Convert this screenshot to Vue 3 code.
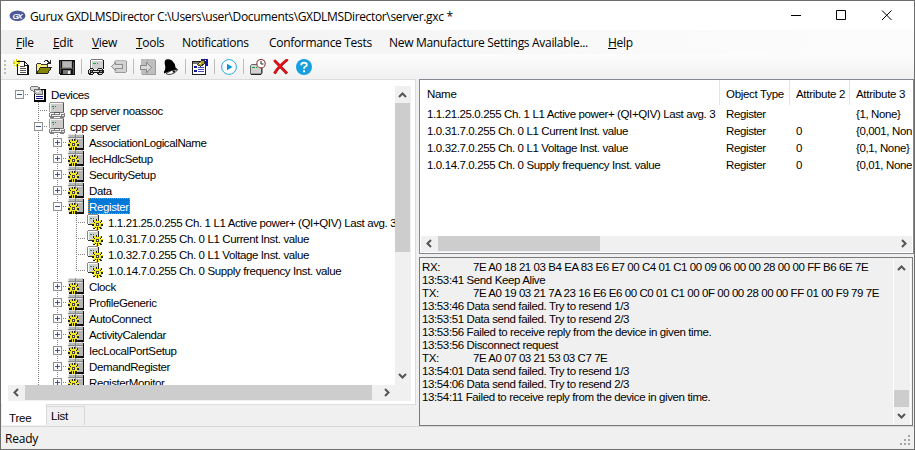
<script setup>
    import { computed } from 'vue'

    const menus = [
        { key: 'F', text: 'ile', width: 37 },
        { key: 'E', text: 'dit', width: 39 },
        { key: 'V', text: 'iew', width: 44 },
        { key: 'T', text: 'ools', width: 46 },
        { key: '', text: 'Notifications', width: 87 },
        { key: '', text: 'Conformance Tests', width: 120 },
        { key: '', text: 'New Manufacture Settings Available...', width: 219 },
        { key: 'H', text: 'elp', width: 40 },
    ]

    const tools = [
        'new', 'open', 'save', '|', 'connect', 'disconnect', '|', 'read', 'bell', '|',
        'properties', '|', 'play', '|', 'schedule', 'delete', 'help',
    ]
    const smooth = ['play', 'delete', 'help', 'schedule', 'bell']

    const nodes = [
        { level: 0, icon: 'devices', box: '-', text: 'Devices' },
        { level: 1, icon: 'device', text: 'cpp server noassoc' },
        { level: 1, icon: 'device', box: '-', text: 'cpp server' },
        { level: 2, icon: 'group', box: '+', text: 'AssociationLogicalName' },
        { level: 2, icon: 'group', box: '+', text: 'IecHdlcSetup' },
        { level: 2, icon: 'group', box: '+', text: 'SecuritySetup' },
        { level: 2, icon: 'group', box: '+', text: 'Data' },
        { level: 2, icon: 'group', box: '-', text: 'Register', selected: true },
        { level: 3, icon: 'item', text: '1.1.21.25.0.255 Ch. 1 L1 Active power+ (QI+QIV) Last avg. 3' },
        { level: 3, icon: 'item', text: '1.0.31.7.0.255 Ch. 0 L1 Current Inst. value' },
        { level: 3, icon: 'item', text: '1.0.32.7.0.255 Ch. 0 L1 Voltage Inst. value' },
        { level: 3, icon: 'item', text: '1.0.14.7.0.255 Ch. 0 Supply frequency Inst. value', last: true },
        { level: 2, icon: 'group', box: '+', text: 'Clock' },
        { level: 2, icon: 'group', box: '+', text: 'ProfileGeneric' },
        { level: 2, icon: 'group', box: '+', text: 'AutoConnect' },
        { level: 2, icon: 'group', box: '+', text: 'ActivityCalendar' },
        { level: 2, icon: 'group', box: '+', text: 'IecLocalPortSetup' },
        { level: 2, icon: 'group', box: '+', text: 'DemandRegister' },
        { level: 2, icon: 'group', box: '+', text: 'RegisterMonitor' },
    ]

    // One guide cell per level, the last one joins the icon
    const tree = computed(() =>
        nodes.map((n) => {
            const guides = []
            for (let i = 0; i <= n.level; i++) {
                if (i === n.level) guides.push(i === 0 ? 'root' : n.last ? 'end' : 'tee')
                else guides.push(i === 0 ? 'none' : 'line')
            }
            return { ...n, guides }
        }),
    )

    const objects = [
        ['1.1.21.25.0.255 Ch. 1 L1 Active power+ (QI+QIV) Last avg. 3', 'Register', '', '{1, None}'],
        ['1.0.31.7.0.255 Ch. 0 L1 Current Inst. value', 'Register', '0', '{0,001, Non'],
        ['1.0.32.7.0.255 Ch. 0 L1 Voltage Inst. value', 'Register', '0', '{0,1, None}'],
        ['1.0.14.7.0.255 Ch. 0 Supply frequency Inst. value', 'Register', '0', '{0,01, None'],
    ]

    const log = [
        { tag: 'RX:', text: '7E A0 18 21 03 B4 EA 83 E6 E7 00 C4 01 C1 00 09 06 00 00 28 00 00 FF B6 6E 7E' },
        { text: '13:53:41 Send Keep Alive' },
        { tag: 'TX:', text: '7E A0 19 03 21 7A 23 16 E6 E6 00 C0 01 C1 00 0F 00 00 28 00 00 FF 01 00 F9 79 7E' },
        { text: '13:53:46 Data send failed. Try to resend 1/3' },
        { text: '13:53:51 Data send failed. Try to resend 2/3' },
        { text: '13:53:56 Failed to receive reply from the device in given time.' },
        { text: '13:53:56 Disconnect request' },
        { tag: 'TX:', text: '7E A0 07 03 21 53 03 C7 7E' },
        { text: '13:54:01 Data send failed. Try to resend 1/3' },
        { text: '13:54:06 Data send failed. Try to resend 2/3' },
        { text: '13:54:11 Failed to receive reply from the device in given time.' },
    ]
</script>

<template>
    <div class="window">
        <!-- Shared icon symbols -->
        <svg class="defs" aria-hidden="true">
            <symbol id="gear" viewBox="0 0 11 11">
                <path
                    d="M4 0h3v2h1V1h2v2H9v1h2v3H9v1h1v2H8V9H7v2H4V9H3v1H1V8h1V7H0V4h2V3H1V1h2v1h1z"
                    fill="#222"
                />
                <path
                    d="M5 0h1v2h2V1h1v2H8v1h3v1H9v2h1v2H9V8H7v3H6V8H5v3H4V8H3v1H1V8h1V5H0V4h3V3H2V1h1v1h2z"
                    fill="#f4ec1c"
                />
                <rect x="4" y="4" width="3" height="3" fill="#444" />
                <rect x="5" y="5" width="1" height="1" fill="#fff" />
            </symbol>
            <symbol id="devices" viewBox="0 0 16 16">
                <path d="M5 3h10v12H5z" fill="#fff" />
                <path d="M14 3h2v13H4v-2h10zM4 7h1v8H4zM9 3h6v1H9z" fill="#000" />
                <path d="M6 10h7v1H6zM6 12h7v1H6zM12 6h1v1h-1zM12 8h1v1h-1z" fill="#14147e" />
                <path d="M1 0h7v1h2v5H3V5H1V4H0V1h1z" fill="#777" />
                <path d="M1 1h7v4H3V4H1z" fill="#ddd" />
                <path d="M4 3h7v1h2v5H6V8H4z" fill="#666" />
                <path d="M5 4h6v1h1v3H6V7H5z" fill="#c8c8c8" />
                <path d="M6 5h3v1H6z" fill="#fff" />
            </symbol>
            <symbol id="device" viewBox="0 0 16 16">
                <path d="M1 1h13v10H1z" fill="#ccc" />
                <path d="M1 0h14v1H1zM0 1h1v9H0z" fill="#999" />
                <path d="M14 1h1v10h-1zM1 10h13v1H1z" fill="#555" />
                <path d="M1 1h12v1H2v8H1z" fill="#f4f4f4" />
                <path d="M3 4h2v1H3zM6 4h1v1H6zM4 6h1v1H4z" fill="#0b9a20" />
                <path d="M1 10h4v1h1v1h4v-1h1v-1h4v1h1v4h-1v1h-4v-1H5v1H1v-1H0v-4h1z" fill="#808080" />
                <path d="M1 11h4v1H2v2H1zM11 11h4v1h-3v2h-1zM5 13h6v1H5zM3 13h2v1H3zM13 13h2v1h-2z" fill="#eee" />
            </symbol>
            <symbol id="group" viewBox="0 0 16 16">
                <path d="M1 1h15v15H1z" fill="#111" />
                <path d="M0 0h15v14H0z" fill="#b5b5b5" />
                <path d="M0 0h7v1H0zM8 0h6v1H8zM0 4h7v1H0zM8 4h6v1H8zM0 0h1v14H0z" fill="#e2e2e2" />
                <path d="M7 0h1v14H7zM0 3h15v1H0z" fill="#8a8a8a" />
                <use href="#gear" x="0" y="5" width="11" height="11" />
            </symbol>
            <symbol id="item" viewBox="0 0 16 16">
                <path d="M0 1h1v9H0zM1 0h10v1H1z" fill="#888" />
                <path d="M1 1h10v9H1z" fill="#d1d1d1" />
                <path d="M11 1h1v10H1v-1h10z" fill="#333" />
                <path d="M1 1h9v1H2v8H1z" fill="#fff" />
                <path d="M3 4h2v1H3zM6 4h1v1H6z" fill="#0a9e1e" />
                <use href="#gear" x="5" y="5" width="11" height="11" />
            </symbol>
            <symbol id="new" viewBox="0 0 16 16">
                <path d="M4.500 2.500h7l3 3v10h-10z" fill="#fff" stroke="#111" />
                <path d="M11.500 2v4h4v10h-11" fill="none" stroke="#111" />
                <path d="M7 7h5v1H7zM7 9h6v1H7zM7 11h6v1H7zM7 13h6v1H7z" fill="#555" />
                <path d="M0 1h1v1H0zM3 0h1v8H3zM0 3h7v2H0zM1 2h1v1H1zM5 1h2v1H5zM1 6h1v1H1zM5 6h1v1H5z" fill="#d8d000" />
                <path d="M2 3h3v2H2z" fill="#fff86a" />
            </symbol>
            <symbol id="open" viewBox="0 0 16 16">
                <path d="M.5 14.500v-9l1-1h3l1 1h6v3" fill="#f5ee72" stroke="#333" />
                <path d="M.5 14.500l4-6h11l-4 6z" fill="#858500" stroke="#222" />
                <path d="M8 2h1V1h3v1h1v1h1V1h1v4h-4V4h1V3h-1V2H9v1H8z" fill="#222" />
            </symbol>
            <symbol id="save" viewBox="0 0 16 16">
                <path d="M0 1h16v15H1l-1-1z" fill="#111" />
                <path d="M3 2h10v7H3z" fill="#999" />
                <path d="M4 3h8v5H4z" fill="#b8b8b8" />
                <path d="M1 2h1v12H1zM14 3h1v12h-1zM2 9h12v1H2z" fill="#555" />
                <path d="M4 11h8v4H4z" fill="#777" />
                <path d="M9 12h2v3H9z" fill="#eee" />
            </symbol>
            <symbol id="connect" viewBox="0 0 16 16">
                <path d="M2 1h13v9H2z" fill="#d0d0d0" />
                <path d="M3 0h12v1H3zM2 1h1v8H2z" fill="#777" />
                <path d="M15 1h1v9h-1z" fill="#111" />
                <path d="M3 1h11v1H4v7H3z" fill="#fff" />
                <path d="M5 4h3v1H5zM9 4h1v1H9z" fill="#10b928" />
                <path d="M2 9h3v1h1v1h3v-1h1V9h4v1h1v1h1v3h-1v1h-1v1h-4v-1H9v-1H6v1H5v1H1v-1H0v-4h1v-1h1z" fill="#1c1c1c" />
                <path d="M2 10h3v1H2zM1 11h1v3H1zM10 10h4v1h-4zM5 12h6v1H5zM3 14h2v1H3zM11 14h3v1h-3z" fill="#d6d6d6" />
                <path d="M3 12h1v1H3zM12 12h2v1h-2z" fill="#999" />
            </symbol>
            <symbol id="disconnect" viewBox="0 0 16 16">
                <path d="M3 2h12v11H3z" fill="#d2d2d2" />
                <path d="M4 1h11v1H4zM3 2h1v3H3z" fill="#b5b5b5" />
                <path d="M15 2h1v11h-1zM4 13h11v1H4z" fill="#9a9a9a" />
                <path d="M.5 7.500l4-4v2h7v4h-7v2z" fill="#ddd" stroke="#8d8d8d" />
            </symbol>
            <symbol id="read" viewBox="0 0 16 16">
                <path d="M1 0h14v15H1z" fill="#bebebe" />
                <path d="M15 1h1v15H2v-1h13z" fill="#9c9c9c" />
                <path d="M7 0h1v15H7z" fill="#adadad" />
                <path d="M.5 6.500h6v-3l5 5-5 5v-3h-6z" fill="#d8d8d8" stroke="#8a8a8a" />
            </symbol>
            <symbol id="bell" viewBox="0 0 16 16">
                <path d="M3 .5Q6-.5 9 1.500Q12 4 12.500 8.500L15 10.500Q9 11 1 14.500V12.500Q3 10 2 6Q1 2 3 .5z" fill="#000" />
                <path d="M3 14.500Q8 10.500 14.500 10.700Q13 14 8 15.300Q4 16 3 14.500z" fill="#fff" stroke="#111" stroke-width=".8" />
                <path d="M9.500 11.800h2.500v1.200l-2 .8z" fill="#111" />
            </symbol>
            <symbol id="properties" viewBox="0 0 16 16">
                <path d="M.5 2.500h13v13H.5z" fill="#fff" stroke="#222" />
                <path d="M1 3h12v2H1z" fill="#777" />
                <path d="M2 7h3v2H2zM2 11h3v2H2z" fill="#111a9a" />
                <path d="M6 8h6v1H6zM6 10h6v1H6zM6 12h6v1H6z" fill="#4747bc" />
                <path d="M9 0h7v1H9zM14 1h2v6h-2z" fill="#1515a0" />
                <path d="M5.500 5.500l4-4h3v3l-4 3z" fill="#ae9d27" stroke="#333" />
                <path d="M7 4h2v1H7z" fill="#fff48c" />
            </symbol>
            <symbol id="play" viewBox="0 0 16 16">
                <circle cx="8" cy="8" r="7.400" fill="#fff" stroke="#29abe2" />
                <path d="M6 4.800l5.500 3.200L6 11.200z" fill="#0793dc" />
            </symbol>
            <symbol id="schedule" viewBox="0 0 16 16">
                <path d="M.5 6.500l1-1h10v8l-1 1.500H.5z" fill="#d2d2d2" stroke="#666" />
                <path d="M12 6v8l-1 1.500H1" fill="none" stroke="#222" />
                <path d="M2 8h3v1H2zM6 8h1v1H6z" fill="#12a52b" />
                <circle cx="11" cy="4.700" r="4.200" fill="#fff" stroke="#8a3a38" stroke-width="1.100" />
                <path d="M11 2v3h2.500" fill="none" stroke="#222" />
            </symbol>
            <symbol id="delete" viewBox="0 0 16 16">
                <path d="M1.500 1.500l12.500 13M14.500.5C9 5 4 10 1.500 14.500" fill="none" stroke="#8d0d12" stroke-width="2.800" />
                <path d="M1 1l12.500 13M15 .3C9 4 4 9 1.500 14.500" fill="none" stroke="#f01419" stroke-width="1.800" />
            </symbol>
            <symbol id="help" viewBox="0 0 16 16">
                <circle cx="8" cy="8" r="8" fill="#189fe2" />
                <path d="M5.300 6.200V5.700q0-2 2.800-2t2.700 2q0 1.100-1.300 1.800Q8 8.200 8 9.800" fill="none" stroke="#fff" stroke-width="1.900" />
                <path d="M7 11.200h2v2H7z" fill="#fff" />
            </symbol>
        </svg>

        <header class="titlebar">
            <svg class="logo" width="17" height="12" viewBox="0 0 17 12">
                <ellipse cx="8.500" cy="5.800" rx="8" ry="5.200" fill="#4d5a94" />
                <text x="8.500" y="8.500" text-anchor="middle" textLength="10">GX</text>
            </svg>
            <span class="title">Gurux GXDLMSDirector C:\Users\user\Documents\GXDLMSDirector\server.gxc *</span>
            <svg class="controls" width="112" height="12" viewBox="0 0 112 12">
                <path d="M5 5h10v1H5z" fill="#000" />
                <path d="M50.500.500h9v9h-9z" fill="none" stroke="#000" />
                <path d="M96 .500l9.500 9.500M105.500.500L96 10" stroke="#000" />
            </svg>
        </header>

        <nav class="menubar">
            <span v-for="m in menus" :key="m.text" class="menu" :style="{ width: m.width + 'px' }">
                <u>{{ m.key }}</u>{{ m.text }}
            </span>
        </nav>

        <div class="toolbar">
            <div class="grip"></div>
            <template v-for="(t, i) in tools" :key="i">
                <div v-if="t === '|'" class="sep"></div>
                <svg v-else class="tool" :class="{ smooth: smooth.includes(t) }">
                    <use :href="'#' + t" />
                </svg>
            </template>
        </div>

        <main class="content">
            <section class="left">
                <div class="tree-page">
                    <div class="tree">
                        <div v-for="n in tree" :key="n.text" class="node">
                            <span v-for="(g, i) in n.guides" :key="i" class="guide" :class="g">
                                <svg v-if="n.box && i === n.level" class="box" width="9" height="9">
                                    <rect x=".5" y=".5" width="8" height="8" fill="#fafafa" stroke="#919191" />
                                    <path d="M2 4h5v1H2z" fill="#3c5598" />
                                    <path v-if="n.box === '+'" d="M4 2h1v5H4z" fill="#3c5598" />
                                </svg>
                            </span>
                            <svg class="icon"><use :href="'#' + n.icon" /></svg>
                            <span class="label" :class="{ selected: n.selected }">{{ n.text }}</span>
                        </div>
                    </div>
                    <div class="vscroll">
                        <svg class="arrow" viewBox="0 0 16 17"><path d="M4 11l3.500-3.500L11 11" /></svg>
                        <div class="thumb tree-v"></div>
                        <svg class="arrow bottom" viewBox="0 0 16 17"><path d="M4 6l3.500 3.500L11 6" /></svg>
                    </div>
                    <div class="hscroll">
                        <svg class="arrow" viewBox="0 0 17 16"><path d="M10 4L6.500 7.500 10 11" /></svg>
                        <div class="thumb tree-h"></div>
                        <svg class="arrow right" viewBox="0 0 17 16"><path d="M7 4l3.500 3.500L7 11" /></svg>
                        <div class="corner"></div>
                    </div>
                </div>
                <div class="tabs">
                    <div class="tab active">Tree</div>
                    <div class="tab">List</div>
                </div>
            </section>

            <section class="right">
                <div class="list">
                    <div class="row head">
                        <span>Name</span>
                        <span>Object Type</span>
                        <span>Attribute 2</span>
                        <span>Attribute 3</span>
                    </div>
                    <div v-for="o in objects" :key="o[0]" class="row">
                        <span v-for="(c, i) in o" :key="i">{{ c }}</span>
                    </div>
                    <div class="hscroll list-scroll">
                        <svg class="arrow" viewBox="0 0 17 16"><path d="M10 4L6.500 7.500 10 11" /></svg>
                        <div class="thumb list-h"></div>
                        <svg class="arrow right" viewBox="0 0 17 16"><path d="M7 4l3.500 3.500L7 11" /></svg>
                    </div>
                </div>

                <div class="log">
                    <div class="lines">
                        <div v-for="(l, i) in log" :key="i" class="line">
                            <span v-if="l.tag" class="tag">{{ l.tag }}</span>
                            <span :class="{ hex: l.tag }">{{ l.text }}</span>
                        </div>
                    </div>
                    <div class="vscroll">
                        <svg class="arrow" viewBox="0 0 16 17"><path d="M4 11l3.500-3.500L11 11" /></svg>
                        <div class="thumb log-v"></div>
                        <svg class="arrow" viewBox="0 0 16 17"><path d="M4 7l3.500 3.500L11 7" /></svg>
                    </div>
                </div>
            </section>
        </main>

        <footer class="status">
            <span>Ready</span>
            <svg width="11" height="11" viewBox="0 0 11 11">
                <path
                    d="M8 0h2v2H8zM4 4h2v2H4zM8 4h2v2H8zM0 8h2v2H0zM4 8h2v2H4zM8 8h2v2H8z"
                    fill="#a5a5a5"
                />
            </svg>
        </footer>
    </div>
</template>

<style>
    body {
        margin: 0;
        overflow: hidden;
    }
</style>

<style scoped>
    .window {
        box-sizing: border-box;
        display: flex;
        flex-direction: column;
        width: 915px;
        height: 450px;
        border: 1px solid #6d6d6d;
        background: #f0f0f0;
        color: #000;
        font-family: 'Liberation Sans', Arial, sans-serif;
        font-size: 11.5px;
        letter-spacing: -0.38px;
        white-space: nowrap;
        overflow: hidden;
    }
    .defs {
        display: none;
    }

    .titlebar {
        display: flex;
        align-items: center;
        height: 30px;
        padding-left: 8px;
        background: #fff;
        font-family: 'Open Sans', 'Noto Sans', sans-serif;
        font-size: 12px;
    }
    .logo text {
        font: italic bold 8px 'Liberation Sans', sans-serif;
        letter-spacing: 0;
        fill: #fff;
    }
    .title {
        margin-left: 4px;
        padding-top: 1px;
        letter-spacing: -0.35px;
    }
    .controls {
        margin-left: auto;
        margin-right: 16px;
    }

    .menubar {
        display: flex;
        height: 24px;
        padding-left: 15px;
        background: linear-gradient(to right, #f0f0f0, #fcfcfc 90%);
        font-family: 'Open Sans', 'Noto Sans', sans-serif;
        font-size: 12px;
        line-height: 25px;
        letter-spacing: -0.31px;
    }
    .menu {
        flex: none;
    }

    .toolbar {
        display: flex;
        align-items: center;
        gap: 7px;
        height: 25px;
        box-sizing: border-box;
        padding-left: 3px;
        background: linear-gradient(#fdfdfd, #f0f0f0);
    }
    .grip {
        width: 2px;
        height: 14px;
        background: repeating-linear-gradient(#bbb 0 2px, transparent 2px 4px);
    }
    .tool {
        width: 16px;
        height: 16px;
        shape-rendering: crispEdges;
    }
    .tool.smooth {
        shape-rendering: auto;
    }
    .sep {
        width: 1px;
        height: 15px;
        margin: 0 -1px;
        background: #bdbdbd;
    }

    .content {
        display: flex;
        height: 347px;
        gap: 3px;
    }
    .left {
        width: 415px;
    }
    .tree-page {
        box-sizing: border-box;
        display: grid;
        grid-template-columns: 387px 16px;
        grid-template-rows: 299px 16px;
        height: 326px;
        padding: 6px 0 0 7px;
        background: #fff;
        border: 1px solid #dcdcdc;
        border-left: 0;
    }
    .tree {
        overflow: hidden;
    }
    .node {
        display: flex;
        height: 16px;
        padding-left: 2px;
    }
    .guide {
        flex: none;
        display: flex;
        width: 19px;
        height: 16px;
        box-sizing: border-box;
        padding: 4px 0 0 5px;
        background-repeat: no-repeat;
        --v: repeating-linear-gradient(#808080 0 1px, transparent 1px 2px);
        --h: repeating-linear-gradient(to right, #808080 0 1px, transparent 1px 2px);
    }
    .line.guide {
        background-image: var(--v);
        background-position: 9px 0;
        background-size: 1px 16px;
    }
    .tee {
        background-image: var(--v), var(--h);
        background-position: 9px 0, 9px 8px;
        background-size: 1px 16px, 10px 1px;
    }
    .end {
        background-image: var(--v), var(--h);
        background-position: 9px 0, 9px 8px;
        background-size: 1px 8px, 10px 1px;
    }
    .root {
        background-image: var(--h);
        background-position: 9px 8px;
        background-size: 10px 1px;
    }
    .icon {
        flex: none;
        width: 16px;
        height: 16px;
        margin: 0 4px 0 1px;
        shape-rendering: crispEdges;
    }
    .label {
        padding: 0 1px;
        line-height: 18px;
    }
    .selected {
        background: #0078d7;
        color: #fff;
        outline: 1px dotted #e08a30;
        outline-offset: -1px;
    }

    .vscroll,
    .hscroll {
        display: flex;
        background: #f0f0f0;
    }
    .vscroll {
        flex-direction: column;
        width: 16px;
    }
    .hscroll {
        height: 16px;
    }
    .tree-page .hscroll {
        grid-column: 1 / 3;
    }
    .arrow {
        flex: none;
        width: 17px;
        height: 16px;
        fill: none;
        stroke: #555;
        stroke-width: 2;
    }
    .vscroll .arrow {
        width: 16px;
        height: 17px;
    }
    .thumb {
        background: #cdcdcd;
    }
    .tree-v {
        width: 15px;
        height: 149px;
    }
    .bottom {
        margin-top: auto;
    }
    .right.arrow {
        margin-left: auto;
    }
    .tree-h {
        width: 347px;
        height: 15px;
    }
    .corner {
        width: 16px;
    }

    .tabs {
        display: flex;
        align-items: flex-start;
        padding-left: 1px;
    }
    .tab {
        box-sizing: border-box;
        width: 38px;
        height: 19px;
        padding-left: 4px;
        border: 1px solid #d9d9d9;
        border-width: 1px 1px 0 0;
        margin-top: 1px;
        line-height: 19px;
        letter-spacing: -0.2px;
    }
    .tab.active {
        width: 45px;
        height: 21px;
        margin-top: -1px;
        padding-left: 7px;
        background: #fff;
        border-top: 0;
        line-height: 28px;
    }

    section.right {
        display: flex;
        flex-direction: column;
        gap: 3px;
        width: 495px;
    }
    .list {
        display: flex;
        flex-direction: column;
        box-sizing: border-box;
        height: 175px;
        border: 1px solid #828790;
        background: #fff;
    }
    .row {
        flex: none;
        display: grid;
        grid-template-columns: 300px 70px 60px 62px;
        height: 17px;
        line-height: 19px;
    }
    .row span {
        padding-left: 7px;
        overflow: hidden;
    }
    .row span + span {
        padding-left: 6px;
    }
    .head {
        height: 25px;
        line-height: 28px;
        letter-spacing: -0.3px;
    }
    .head span + span {
        border-left: 1px solid #e5e5e5;
        margin-left: -1px;
    }
    .list-scroll {
        margin: auto 1px 1px;
    }
    .list-h {
        width: 162px;
        height: 15px;
    }

    .log {
        display: flex;
        box-sizing: border-box;
        width: 494px;
        height: 169px;
        padding: 1px;
        border: 1px solid #7a7a7a;
    }
    .lines {
        width: 474px;
        padding: 2px 0 0 1px;
    }
    .log .line {
        display: flex;
        height: 13px;
        line-height: 13px;
    }
    .log .hex {
        letter-spacing: -0.44px;
    }
    .tag {
        width: 51px;
    }
    .log .vscroll {
        border-left: 1px solid #fff;
        border-right: 1px solid #fff;
    }
    .log-v {
        width: 15px;
        height: 17px;
        margin-top: auto;
    }

    .status {
        display: flex;
        justify-content: space-between;
        height: 22px;
        padding: 0 3px 0 4px;
        border-top: 1px solid #d7d7d7;
        font-family: 'Open Sans', 'Noto Sans', sans-serif;
        font-size: 12px;
        line-height: 24px;
        letter-spacing: -0.2px;
    }
    .status svg {
        margin-top: 8px;
    }
</style>
